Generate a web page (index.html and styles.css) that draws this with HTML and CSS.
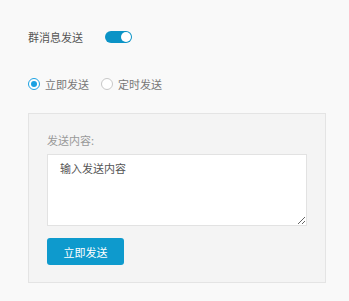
FILE: index.html
```html
<!DOCTYPE html>
<html lang="zh">
  <head>
    <meta charset="UTF-8" />
    <meta name="viewport" content="width=device-width, initial-scale=1.0" />
    <title>群消息发送</title>
    <link rel="stylesheet" href="styles.css">
  </head>
  <body>
    <div class="page">
      <div class="row">
        <span class="title">群消息发送</span>
        <span class="switch on"><span class="knob"></span></span>
      </div>

      <div class="row radios">
        <label class="radio checked"><span class="dot"></span>立即发送</label>
        <label class="radio"><span class="dot"></span>定时发送</label>
      </div>

      <div class="panel">
        <div class="label">发送内容:</div>
        <textarea class="content" placeholder="输入发送内容"></textarea>
        <button class="btn">立即发送</button>
      </div>
    </div>
  </body>
</html>
```

FILE: styles.css
```css
body {
  margin: 0;
  background: #f9f9f9;
  font-family: "Noto Sans CJK SC", "Noto Sans", sans-serif;
  font-size: 11px;
  color: #555;
}

.page {
  padding: 28px 0 0 28px;
}

.row {
  display: flex;
  align-items: center;
  height: 18px;
}

.title {
  width: 77px;
}

.switch {
  display: flex;
  align-items: center;
  justify-content: flex-end;
  width: 27px;
  height: 12px;
  border-radius: 6px;
  background: #0b93c6;
  padding: 0 1px;
  box-sizing: border-box;
}
.knob {
  width: 10px;
  height: 10px;
  border-radius: 50%;
  background: #fff;
}

.radios {
  margin-top: 29px;
  gap: 12px;
  color: #777;
}
.radio {
  display: flex;
  align-items: center;
  gap: 5px;
}
.dot {
  width: 12px;
  height: 12px;
  box-sizing: border-box;
  border: 1px solid #c8c8c8;
  border-radius: 50%;
  background: #fff;
  display: flex;
  align-items: center;
  justify-content: center;
}
.radio.checked .dot {
  border-color: #1ba1e2;
}
.radio.checked .dot::after {
  content: "";
  width: 6px;
  height: 6px;
  border-radius: 50%;
  background: #1ba1e2;
}

.panel {
  margin-top: 20px;
  width: 298px;
  box-sizing: border-box;
  background: #f4f4f4;
  border: 1px solid #e4e4e4;
  padding: 18px 0 17px 18px;
}

.label {
  line-height: 16px;
  color: #999;
}

.content {
  display: block;
  margin-top: 6px;
  width: 260px;
  height: 72px;
  box-sizing: border-box;
  border: 1px solid #e2e2e2;
  background: #fff;
  padding: 5px 12px;
  font-family: inherit;
  font-size: 11px;
  line-height: 16px;
  color: #555;
  outline: none;
}
.content::placeholder {
  color: #555;
}

.btn {
  display: block;
  margin-top: 12px;
  width: 77px;
  height: 27px;
  border: none;
  border-radius: 3px;
  background: #0e9acd;
  color: #fff;
  font-family: inherit;
  font-size: 11px;
}
```
